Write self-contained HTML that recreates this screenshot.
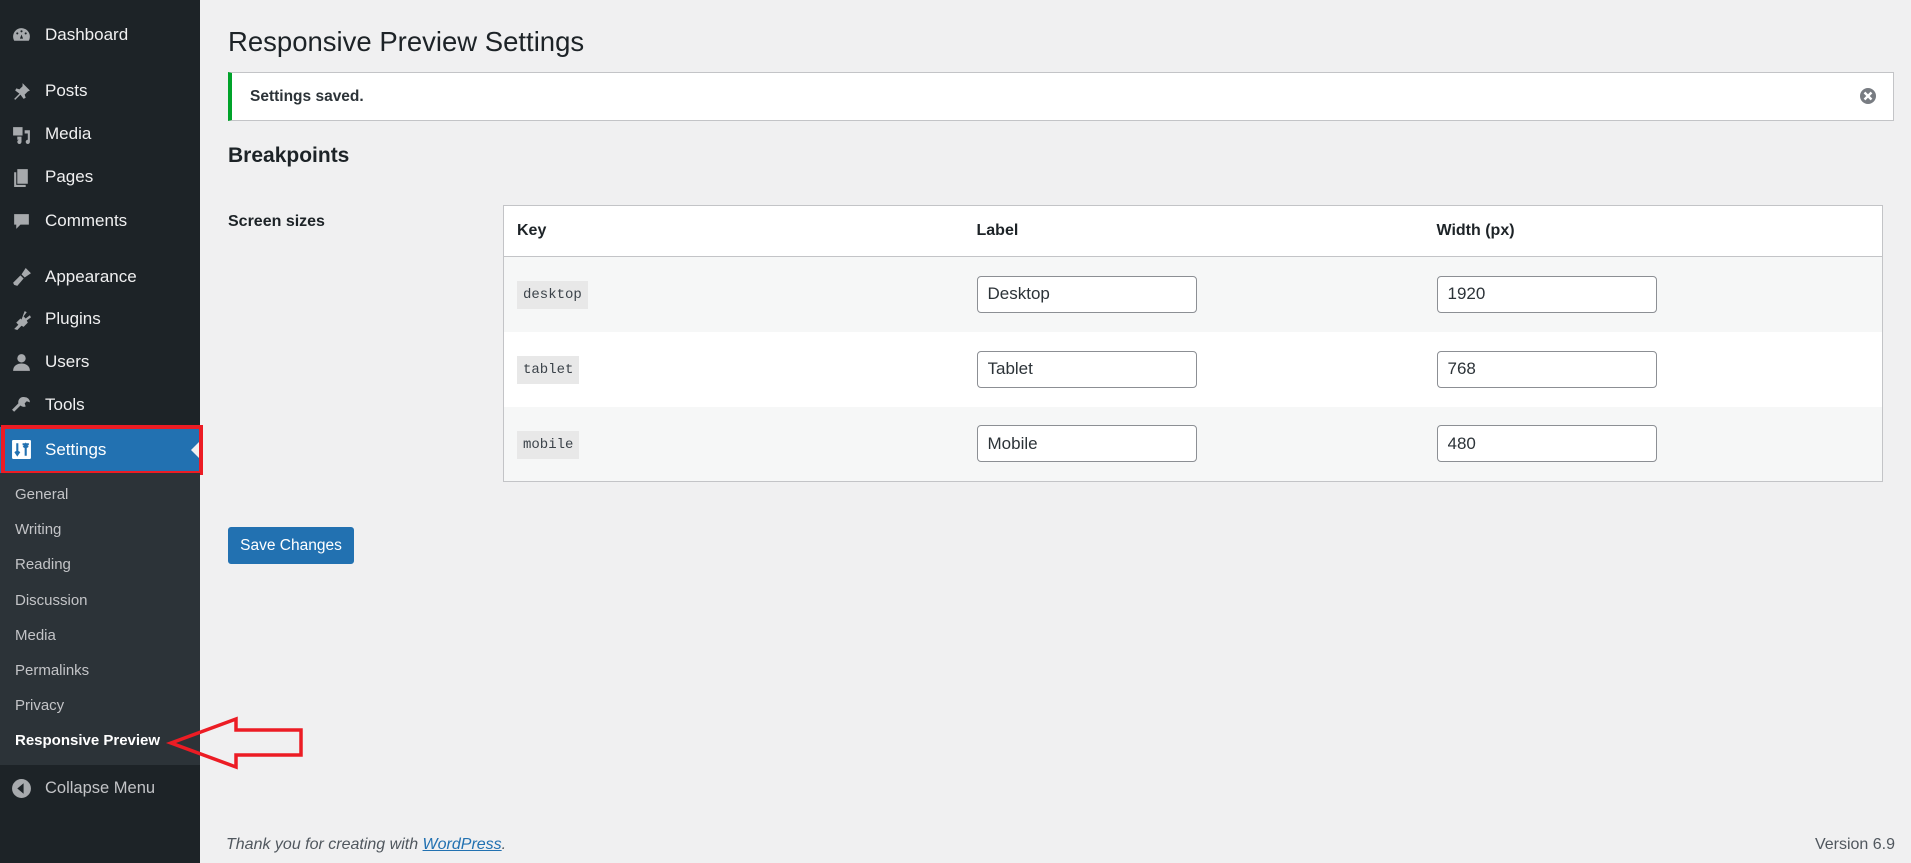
<!DOCTYPE html>
<html><head><meta charset="utf-8"><style>
*{box-sizing:border-box;margin:0;padding:0}
body{width:1911px;height:863px;background:#f0f0f1;font-family:"Liberation Sans",sans-serif;color:#1d2327;position:relative;overflow:hidden}
#side{position:absolute;left:0;top:0;width:200px;height:863px;background:#1d2327}
.mi{position:absolute;left:0;width:200px;height:40px;color:#f0f0f1;font-size:17px;line-height:40px;padding-left:45px}
.mi svg{position:absolute;left:11px;top:10px;width:21px;height:21px;fill:#a7aaad}
#sub{position:absolute;left:0;top:473px;width:200px;height:292px;background:#2c3338}
.si{position:absolute;left:15px;font-size:15px;color:#c3c4c7}
h1{position:absolute;left:228px;top:26px;font-size:27.5px;font-weight:400}
.notice{position:absolute;left:228px;top:72px;width:1666px;height:49px;background:#fff;border:1px solid #c3c4c7;border-left:4px solid #00a32a}
.notice p{position:absolute;left:18px;top:15px;font-size:15.5px;font-weight:bold;color:#2c3338}
h2{position:absolute;left:228px;top:144px;font-size:21px;font-weight:bold}
.th{position:absolute;left:228px;top:213px;font-size:16px;font-weight:bold}
table{position:absolute;left:503px;top:205px;width:1380px;border:1px solid #c3c4c7;border-collapse:collapse;background:#fff}
thead td{height:51px;border-bottom:1px solid #c3c4c7;font-weight:bold;font-size:16px}
td{padding-left:13px;vertical-align:middle}
tbody tr{height:75px}
tbody tr:nth-child(odd){background:#f6f7f7}
code{font-family:"Liberation Mono",monospace;font-size:14px;background:#e8e8e8;padding:6px 6px;color:#3c434a}
input{width:220px;height:37px;border:1px solid #8c8f94;border-radius:4px;font-family:"Liberation Sans",sans-serif;font-size:17px;padding-left:10px;color:#2c3338}
.btn{position:absolute;left:228px;top:527px;width:126px;height:37px;background:#2271b1;border:1px solid #2271b1;border-radius:3px;color:#fff;font-size:15.5px;line-height:35px;text-align:center}
.foot{position:absolute;left:226px;top:836px;font-size:16px;font-style:italic;color:#50575e}
.foot a{color:#2271b1;text-decoration:underline}
.ver{position:absolute;right:16px;top:836px;font-size:16px;color:#50575e}
</style></head><body>
<div id="side">
<div class="mi" style="top:15px"><svg viewBox="0 0 20 20"><path d="M10 3a8 8 0 0 0-8 8c0 1.5.4 2.9 1.1 4h13.8A8 8 0 0 0 10 3zm0 2a1 1 0 1 1 0 2 1 1 0 0 1 0-2zm-4 2a1 1 0 1 1 0 2 1 1 0 0 1 0-2zm8 0a1 1 0 1 1 0 2 1 1 0 0 1 0-2zM10 9l1.5 4h-3z"/></svg>Dashboard</div>
<div class="mi" style="top:71px"><svg viewBox="0 0 20 20"><path d="M11 2l7 7-2 1-3 3 1 3-2 1-3-4-5 5-1-1 5-5-4-3 1-2 3 1 3-3z"/></svg>Posts</div>
<div class="mi" style="top:114px"><svg viewBox="0 0 20 20"><path d="M2 3h9v8H2zM13 6h5v11a2 2 0 1 1-2-2V9h-3zM6 12h4v5a2 2 0 1 1-2-2h-2z"/></svg>Media</div>
<div class="mi" style="top:157px"><svg viewBox="0 0 20 20"><path d="M6 2h10v14H6zM3 5h2v12h9v2H3z"/></svg>Pages</div>
<div class="mi" style="top:201px"><svg viewBox="0 0 20 20"><path d="M3 3h14v10h-8l-4 4v-4H3z"/></svg>Comments</div>
<div class="mi" style="top:257px"><svg viewBox="0 0 20 20"><path d="M14 1l5 5-6 4-3-3zM9 8l3 3-6 7-3-1-1-2z"/></svg>Appearance</div>
<div class="mi" style="top:299px"><svg viewBox="0 0 20 20"><path d="M13 2l2 1-3 4 2 2 4-3 1 2-4 3 1 2-4 4-2-1-4 4-3-1 4-4-2-2 4-4 1 1z"/></svg>Plugins</div>
<div class="mi" style="top:342px"><svg viewBox="0 0 20 20"><circle cx="10" cy="6" r="4"/><path d="M2 18c0-5 4-7 8-7s8 2 8 7z"/></svg>Users</div>
<div class="mi" style="top:385px"><svg viewBox="0 0 20 20"><path d="M13 2a5 5 0 0 1 5 5l-3-1-2 2 1 3a5 5 0 0 1-5-1l-6 6-2-2 6-6a5 5 0 0 1 6-6z"/></svg>Tools</div>
<div class="mi" style="top:427px;height:46px;line-height:46px;background:#2271b1;color:#fff"><svg viewBox="0 0 20 20" style="top:12px;fill:#fff"><rect x="1" y="1" width="18" height="18" rx="1"/><path d="M6 4v10M4 12l2 3 2-3M14 16V6M12 8l2-3 2 3M11 5h6" stroke="#2271b1" stroke-width="2" fill="none"/></svg>Settings
<div style="position:absolute;right:0;top:14px;border:9px solid transparent;border-right-color:#f0f0f1;border-left:0"></div></div>
<div style="position:absolute;left:1px;top:425px;width:202px;height:50px;border:4px solid #ec1c24"></div>
<div id="sub"></div>
<div class="si" style="top:486px">General</div>
<div class="si" style="top:521px">Writing</div>
<div class="si" style="top:556px">Reading</div>
<div class="si" style="top:592px">Discussion</div>
<div class="si" style="top:627px">Media</div>
<div class="si" style="top:662px">Permalinks</div>
<div class="si" style="top:697px">Privacy</div>
<div class="si" style="top:732px;color:#fff;font-weight:bold">Responsive Preview</div>
<div class="mi" style="top:768px;color:#c3c4c7;font-size:16.5px"><svg viewBox="0 0 20 20"><circle cx="10" cy="10" r="9"/><path d="M12 5v10L6 10z" fill="#1d2327"/></svg>Collapse Menu</div>
</div>
<svg style="position:absolute;left:0;top:0" width="400" height="863"><path d="M171 743 L236 719 L236 730 L301 730 L301 755 L236 755 L236 767 Z" fill="none" stroke="#ec1c24" stroke-width="3.5"/></svg>
<h1>Responsive Preview Settings</h1>
<div class="notice"><p>Settings saved.</p><svg style="position:absolute;right:16px;top:14px" width="18" height="18" viewBox="0 0 18 18"><circle cx="9" cy="9" r="8" fill="#787c82"/><path d="M5.5 5.5l7 7M12.5 5.5l-7 7" stroke="#fff" stroke-width="2.4"/></svg></div>
<h2>Breakpoints</h2>
<div class="th">Screen sizes</div>
<table>
<thead><tr><td style="width:460px">Key</td><td style="width:460px">Label</td><td>Width (px)</td></tr></thead>
<tbody>
<tr><td><code>desktop</code></td><td><input value="Desktop"></td><td><input value="1920"></td></tr>
<tr><td><code>tablet</code></td><td><input value="Tablet"></td><td><input value="768"></td></tr>
<tr><td><code>mobile</code></td><td><input value="Mobile"></td><td><input value="480"></td></tr>
</tbody></table>
<div class="btn">Save Changes</div>
<div class="foot">Thank you for creating with <a>WordPress</a>.</div>
<div class="ver">Version 6.9</div>
</body></html>
